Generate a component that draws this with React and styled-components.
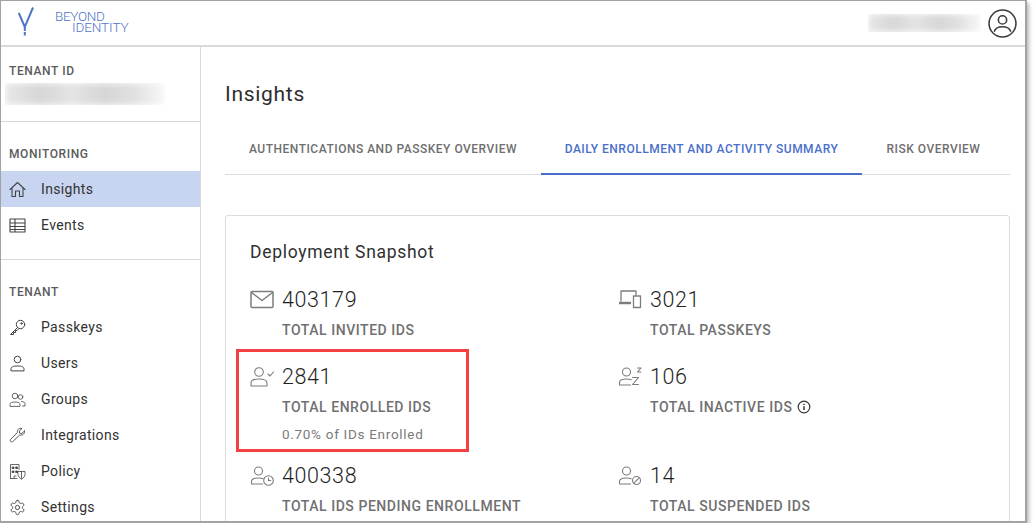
import React from 'react';
import styled, {createGlobalStyle} from 'styled-components';

const GlobalStyle = createGlobalStyle`
  html, body {
    margin: 0;
    padding: 0;
    background: #fff;
    font-family: Roboto, "Liberation Sans", sans-serif;
    color: #2b2b2b;
  }
`;

const Frame = styled.div`
  width: 1027px;
  height: 523px;
  box-sizing: border-box;
  border: solid #a3a3a3;
  border-width: 1px 2px 2px 1px;
  box-shadow: 2px 3px 4px rgba(0, 0, 0, 0.28);
  overflow: hidden;
  display: flex;
  flex-direction: column;
  background: #fff;
`;

const Header = styled.header`
  height: 46px;
  flex: none;
  box-sizing: border-box;
  border-bottom: 2px solid #d9d9d9;
  display: flex;
  align-items: center;
  justify-content: space-between;
  padding: 0 8px 0 17px;
`;

const Logo = styled.div`
  display: flex;
  align-items: center;
  gap: 21px;
  color: #4f76c6;
  svg { margin-top: -2px; }
`;

const LogoText = styled.div`
  font-size: 13.5px;
  font-weight: 300;
  line-height: 11px;
  letter-spacing: -0.3px;
  margin-top: -3px;
  span { display: block; }
  span + span { padding-left: 17px; letter-spacing: -0.1px; }
`;

const HeaderRight = styled.div`
  display: flex;
  align-items: center;
  gap: 7px;
`;

const Blurred = styled.div`
  width: ${p => p.$w}px;
  height: ${p => p.$h}px;
  overflow: hidden;
  &::before {
    content: '';
    display: block;
    height: 100%;
    background: linear-gradient(90deg, #e8e8e8, #d6d6d6 22%, #e4e4e4 42%, #d6d6d6 62%, #e0e0e0 80%, #f8f8f8);
    filter: blur(3px);
  }
`;

const Body = styled.div`
  flex: 1;
  min-height: 0;
  display: flex;
`;

const Sidebar = styled.aside`
  width: 199px;
  flex: none;
  box-sizing: content-box;
  border-right: 1px solid #d9d9d9;
  overflow: hidden;
`;

const SideSection = styled.section`
  padding: ${p => p.$top}px 0 ${p => p.$bottom}px;
  & + & { border-top: 1px solid #d9d9d9; }
`;

const SideLabel = styled.div`
  padding-left: 8px;
  font-size: 12px;
  line-height: 16px;
  font-weight: 500;
  letter-spacing: 0.6px;
  color: #5a5a5a;
`;

const TenantValue = styled.div`
  margin: 4px 0 0 4px;
`;

const NavList = styled.nav`
  margin-top: 9px;
`;

const NavItem = styled.div`
  height: 36px;
  display: flex;
  align-items: center;
  gap: 15px;
  padding-left: 8px;
  font-size: 14px;
  letter-spacing: 0.35px;
  color: #333;
  background: ${p => (p.$active ? '#c8d5f1' : 'transparent')};
  svg { flex: none; color: #444; }
`;

const Main = styled.main`
  flex: 1;
  min-width: 0;
  padding: 34px 15px 0 24px;
  overflow: hidden;
`;

const Title = styled.h1`
  margin: 0;
  font-size: 21px;
  line-height: 26px;
  font-weight: 400;
  letter-spacing: 0.7px;
  color: #2e2e2e;
`;

const Tabs = styled.div`
  margin-top: 14px;
  height: 54px;
  box-sizing: border-box;
  border-bottom: 1px solid #dcdcdc;
  display: flex;
`;

const Tab = styled.div`
  height: 54px;
  box-sizing: border-box;
  width: ${p => p.$w}px;
  padding-top: 20px;
  text-align: center;
  font-size: 12px;
  line-height: 16px;
  font-weight: 500;
  letter-spacing: 0.5px;
  white-space: nowrap;
  color: ${p => (p.$active ? '#4a6fcb' : '#6f6f6f')};
  border-bottom: ${p => (p.$active ? '2px solid #4a6fcb' : 'none')};
`;

const Card = styled.div`
  margin-top: 40px;
  height: 400px;
  box-sizing: border-box;
  border: 1px solid #dcdcdc;
  border-radius: 3px;
  padding: 25px 24px;
`;

const CardTitle = styled.h2`
  margin: 0;
  font-size: 17.5px;
  line-height: 22px;
  font-weight: 400;
  letter-spacing: 0.7px;
  color: #303030;
`;

const StatGrid = styled.div`
  margin-top: 24px;
  display: grid;
  grid-template-columns: 368px 1fr;
  grid-auto-rows: auto;
`;

const Stat = styled.div`
  height: ${p => p.$h}px;
  display: grid;
  grid-template-columns: 32px 1fr;
  align-content: start;
`;

const StatIcon = styled.div`
  height: 26px;
  display: flex;
  align-items: center;
  color: #7c7c7c;
`;

const StatValue = styled.div`
  font-size: 21.5px;
  font-weight: 300;
  line-height: 26px;
  letter-spacing: 0.6px;
  color: #1f1f1f;
`;

const StatLabel = styled.div`
  grid-column: 2;
  margin-top: 8px;
  display: flex;
  align-items: center;
  gap: 5px;
  font-size: 14px;
  line-height: 18px;
  font-weight: 500;
  letter-spacing: 0.55px;
  color: #707070;
`;

const StatNote = styled.div`
  grid-column: 2;
  margin-top: 10px;
  font-size: 13.5px;
  line-height: 16px;
  letter-spacing: 0.7px;
  color: #7a7a7a;
`;

const Highlight = styled.div`
  position: absolute;
  left: 236px;
  top: 349px;
  width: 233px;
  height: 103px;
  box-sizing: border-box;
  border: 3px solid #f44040;
  pointer-events: none;
`;

const Stroke = ({size = 20, vb = 24, sw = 1.3, children}) => (
  <svg
    width={size}
    height={size}
    viewBox={`0 0 ${vb} ${vb}`}
    fill="none"
    stroke="currentColor"
    strokeWidth={sw}
    strokeLinecap="round"
    strokeLinejoin="round"
  >
    {children}
  </svg>
);

const HomeIcon = () => (
  <Stroke size={17} vb={17} sw={1.1}>
    <path d="M1 8.500 8.500 1.500 16 8.500M3 7v8.500h3.500V10h4v5.500H14V7" />
  </Stroke>
);
const TableIcon = () => (
  <Stroke size={17} vb={17} sw={1.1}>
    <path d="M1 2h15v13H1zM1 6h15M1 9.500h15M1 12.500h15M6 2v13" />
  </Stroke>
);
const KeyIcon = () => (
  <Stroke size={17} vb={17} sw={1}>
    <circle cx="11.500" cy="5.500" r="4.200" />
    <path d="M8.500 8.500 1.500 15.500h3v-2h2v-2h1.500l1.500-1.500" />
    <circle cx="12.500" cy="4.500" r="0.800" />
  </Stroke>
);
const UserIcon = () => (
  <Stroke size={17} vb={17} sw={1}>
    <circle cx="8.500" cy="4.500" r="3.300" />
    <path d="M2 15.500v-1.500c0-2 2-3 6.500-3s6.500 1 6.500 3v1.500z" />
  </Stroke>
);
const GroupIcon = () => (
  <Stroke size={17} vb={17} sw={0.8}>
    <circle cx="6" cy="5" r="2.800" />
    <circle cx="11.500" cy="6" r="2.300" />
    <path d="M1 15v-1.500c0-1.800 2-2.500 5-2.500s5 .7 5 2.500V15zM12.500 10.500c2 0 3.500.8 3.500 2.500v2h-2.500" />
  </Stroke>
);
const WrenchIcon = () => (
  <Stroke size={17} vb={17} sw={0.9}>
    <path d="M15.500 4 12.800 6.500 10.500 6V3.800L13 1.500c-2.500-.8-5 1-4.600 4L1.600 12.300c-1.200 1.600.6 3.500 2.200 2.200L10.700 8c3 .6 5.500-1.500 4.800-4z" />
  </Stroke>
);
const PolicyIcon = () => (
  <Stroke size={17} vb={17} sw={0.8}>
    <path d="M1.500 15.500V1.500h8.500v5M1.500 15.500H8M5 15.500v-2.500h2" />
    <path d="M3.500 4h1.500v1.500H3.500zM7 4h1.500v1.500H7zM3.500 8h1.500v1.500H3.500zM7 8h1.500v1.500H7z" fill="currentColor" />
    <path d="M9 8.500h7v3c0 2-1.500 3.500-3.500 4.500C10.500 15 9 13.500 9 11.500zM12.500 8.500V16" />
  </Stroke>
);
const GearIcon = () => (
  <Stroke size={17} vb={24} sw={1.300}>
    <path d="M12.220 2h-.44a2 2 0 0 0-2 2v.18a2 2 0 0 1-1 1.730l-.43.250a2 2 0 0 1-2 0l-.15-.080a2 2 0 0 0-2.730.730l-.22.380a2 2 0 0 0 .730 2.730l.15.100a2 2 0 0 1 1 1.720v.510a2 2 0 0 1-1 1.740l-.15.090a2 2 0 0 0-.730 2.730l.22.380a2 2 0 0 0 2.730.730l.15-.080a2 2 0 0 1 2 0l.43.250a2 2 0 0 1 1 1.730V20a2 2 0 0 0 2 2h.44a2 2 0 0 0 2-2v-.18a2 2 0 0 1 1-1.730l.43-.250a2 2 0 0 1 2 0l.15.080a2 2 0 0 0 2.730-.730l.22-.390a2 2 0 0 0-.730-2.730l-.15-.080a2 2 0 0 1-1-1.740v-.500a2 2 0 0 1 1-1.740l.15-.090a2 2 0 0 0 .730-2.730l-.22-.380a2 2 0 0 0-2.730-.730l-.15.080a2 2 0 0 1-2 0l-.43-.250a2 2 0 0 1-1-1.730V4a2 2 0 0 0-2-2z" />
    <circle cx="12" cy="12" r="3" />
  </Stroke>
);
const AccountIcon = () => (
  <svg width="29" height="29" viewBox="0 0 28 28" fill="none" stroke="#3c3c3c" strokeWidth="1.500">
    <circle cx="14" cy="14" r="13" />
    <circle cx="14" cy="10.500" r="4" />
    <path d="M6 22c1-3.500 4-4.800 8-4.800s7 1.300 8 4.800" />
  </svg>
);
const MailIcon = () => (
  <Stroke size={24} vb={24} sw={1.500}>
    <rect x="1" y="3.500" width="22" height="16" rx="1" />
    <path d="M1.500 4.500 12 12.500 22.500 4.500" />
  </Stroke>
);
const DevicesIcon = () => (
  <Stroke size={24} vb={24} sw={1.300}>
    <path d="M3 13V3h15v4" />
    <path d="M1 15h12" strokeWidth="2.500" strokeLinecap="butt" />
    <path d="M15.500 8h7v11.500h-7z" />
  </Stroke>
);
const PersonBase = () => (
  <>
    <circle cx="8.500" cy="7" r="4" />
    <path d="M1.500 20v-2.500c0-2.300 2.500-3.500 7-3.500 2 0 3.500.2 4.700.7M1.500 20h11" />
  </>
);
const EnrolledIcon = () => (
  <Stroke size={24} vb={24} sw={1.100}>
    <circle cx="9" cy="7" r="4.300" />
    <path d="M1 21v-3c0-2.500 3-4 8-4s8 1.500 8 4v3z" />
    <path d="M18 9 20 11 23.500 7" />
  </Stroke>
);
const InactiveIcon = () => (
  <Stroke size={24} vb={24} sw={1.100}>
    <PersonBase />
    <path d="M19.500 3h3.500l-3.500 4h3.500M14.500 12.500h6l-6 7h6" />
  </Stroke>
);
const PendingIcon = () => (
  <Stroke size={24} vb={24} sw={1.100}>
    <PersonBase />
    <circle cx="18.500" cy="16.500" r="4.800" />
    <path d="M18.500 14V16.500h2.200" />
  </Stroke>
);
const SuspendedIcon = () => (
  <Stroke size={24} vb={24} sw={1.100}>
    <PersonBase />
    <circle cx="18.500" cy="16.500" r="4" />
    <path d="M15.700 19.300l5.600-5.600" />
  </Stroke>
);
const InfoIcon = () => (
  <svg width="14" height="14" viewBox="0 0 14 14" fill="none" stroke="#333" strokeWidth="1.200">
    <circle cx="7" cy="7" r="5.800" />
    <path d="M7 6.200V10M7 3.800v1.200" strokeWidth="1.500" />
  </svg>
);

const navMonitoring = [
  {label: 'Insights', Icon: HomeIcon, active: true},
  {label: 'Events', Icon: TableIcon}
];

const navTenant = [
  {label: 'Passkeys', Icon: KeyIcon},
  {label: 'Users', Icon: UserIcon},
  {label: 'Groups', Icon: GroupIcon},
  {label: 'Integrations', Icon: WrenchIcon},
  {label: 'Policy', Icon: PolicyIcon},
  {label: 'Settings', Icon: GearIcon}
];

const stats = [
  {value: '403179', label: 'TOTAL INVITED IDS', Icon: MailIcon, h: 77},
  {value: '3021', label: 'TOTAL PASSKEYS', Icon: DevicesIcon, h: 77},
  {value: '2841', label: 'TOTAL ENROLLED IDS', note: '0.70% of IDs Enrolled', Icon: EnrolledIcon, h: 99},
  {value: '106', label: 'TOTAL INACTIVE IDS', info: true, Icon: InactiveIcon, h: 99},
  {value: '400338', label: 'TOTAL IDS PENDING ENROLLMENT', Icon: PendingIcon, h: 60},
  {value: '14', label: 'TOTAL SUSPENDED IDS', Icon: SuspendedIcon, h: 60}
];

const NavGroup = ({items}) => (
  <NavList>
    {items.map(({label, Icon, active}) => (
      <NavItem key={label} $active={active}>
        <Icon />
        {label}
      </NavItem>
    ))}
  </NavList>
);

export default function App() {
  return (
    <>
      <GlobalStyle />
      <Frame>
        <Header>
          <Logo>
            <svg width="16" height="30" viewBox="0 0 16 30" fill="none">
              <path d="M.8 6 6.800 20 15 .5" stroke="#4f76c6" strokeWidth="2" />
              <path d="M6.800 20v8.500" stroke="#4f76c6" strokeWidth="2" strokeDasharray="4 1" />
            </svg>
            <LogoText>
              <span>BEYOND</span>
              <span>IDENTITY</span>
            </LogoText>
          </Logo>
          <HeaderRight>
            <Blurred $w={113} $h={18} />
            <AccountIcon />
          </HeaderRight>
        </Header>
        <Body>
          <Sidebar>
            <SideSection $top={16} $bottom={16}>
              <SideLabel>TENANT ID</SideLabel>
              <TenantValue>
                <Blurred $w={160} $h={22} />
              </TenantValue>
            </SideSection>
            <SideSection $top={24} $bottom={16}>
              <SideLabel>MONITORING</SideLabel>
              <NavGroup items={navMonitoring} />
            </SideSection>
            <SideSection $top={24} $bottom={0}>
              <SideLabel>TENANT</SideLabel>
              <NavGroup items={navTenant} />
            </SideSection>
          </Sidebar>
          <Main>
            <Title>Insights</Title>
            <Tabs>
              <Tab $w={316}>AUTHENTICATIONS AND PASSKEY OVERVIEW</Tab>
              <Tab $w={321} $active>DAILY ENROLLMENT AND ACTIVITY SUMMARY</Tab>
              <Tab $w={143}>RISK OVERVIEW</Tab>
            </Tabs>
            <Card>
              <CardTitle>Deployment Snapshot</CardTitle>
              <StatGrid>
                {stats.map(({value, label, note, info, Icon, h}) => (
                  <Stat key={label} $h={h}>
                    <StatIcon>
                      <Icon />
                    </StatIcon>
                    <StatValue>{value}</StatValue>
                    <StatLabel>
                      {label}
                      {info && <InfoIcon />}
                    </StatLabel>
                    {note && <StatNote>{note}</StatNote>}
                  </Stat>
                ))}
              </StatGrid>
            </Card>
          </Main>
        </Body>
      </Frame>
      <Highlight />
    </>
  );
}
